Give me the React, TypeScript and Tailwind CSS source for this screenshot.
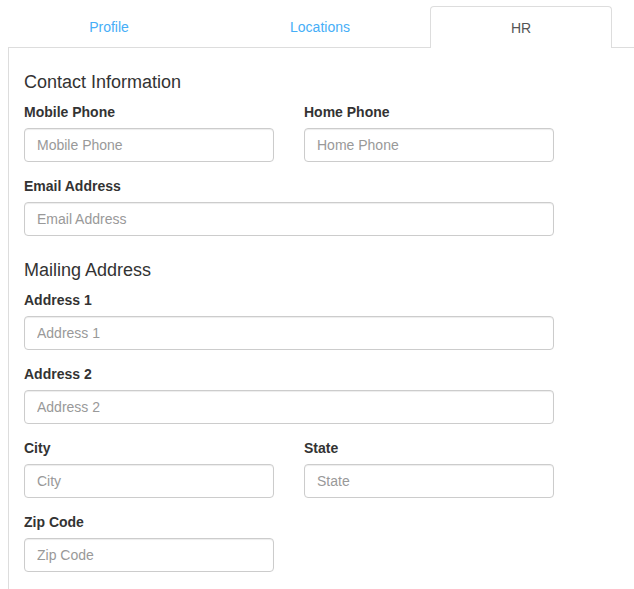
import React from 'react'

function Field({ label, wide }: { label: string; wide?: boolean }) {
  return (
    <div className="mb-[14px]">
      <label className="mb-[6px] block h-5 text-sm font-bold leading-5 text-[#333]">{label}</label>
      <input
        placeholder={label}
        className={`block h-[34px] rounded border border-[#ccc] bg-white px-3 text-sm text-[#555] shadow-[inset_0_1px_1px_rgba(0,0,0,0.075)] outline-none placeholder:text-[#999] ${
          wide ? 'w-[530px]' : 'w-[250px]'
        }`}
      />
    </div>
  )
}

function Heading({ children }: { children: React.ReactNode }) {
  return <h4 className="mb-[10px] h-5 text-lg leading-5 text-[#333]">{children}</h4>
}

export default function App() {
  const tabs = [
    { name: 'Profile', w: 'w-[202px]' },
    { name: 'Locations', w: 'w-[220px]' },
    { name: 'HR', w: 'w-[182px]', active: true },
  ]

  return (
    <div className="min-h-[589px] overflow-hidden bg-white pl-2 pt-[6px] font-['Liberation_Sans',Arial,sans-serif]">
      <ul className="flex h-[42px] border-b border-[#ddd]">
        {tabs.map((t) =>
          t.active ? (
            <li
              key={t.name}
              className={`${t.w} -mb-px flex h-[42px] items-center justify-center rounded-t border border-b-0 border-[#ddd] bg-white text-sm text-[#555]`}
            >
              {t.name}
            </li>
          ) : (
            <li
              key={t.name}
              className={`${t.w} flex items-center justify-center text-sm text-[#46aef7]`}
            >
              {t.name}
            </li>
          )
        )}
      </ul>
      <div className="min-h-[541px] border-l border-[#ddd] pl-[15px] pt-6">
        <Heading>Contact Information</Heading>
        <div className="flex gap-[30px]">
          <Field label="Mobile Phone" />
          <Field label="Home Phone" />
        </div>
        <Field label="Email Address" wide />
        <div className="pt-[10px]">
          <Heading>Mailing Address</Heading>
        </div>
        <Field label="Address 1" wide />
        <Field label="Address 2" wide />
        <div className="flex gap-[30px]">
          <Field label="City" />
          <Field label="State" />
        </div>
        <Field label="Zip Code" />
      </div>
    </div>
  )
}
